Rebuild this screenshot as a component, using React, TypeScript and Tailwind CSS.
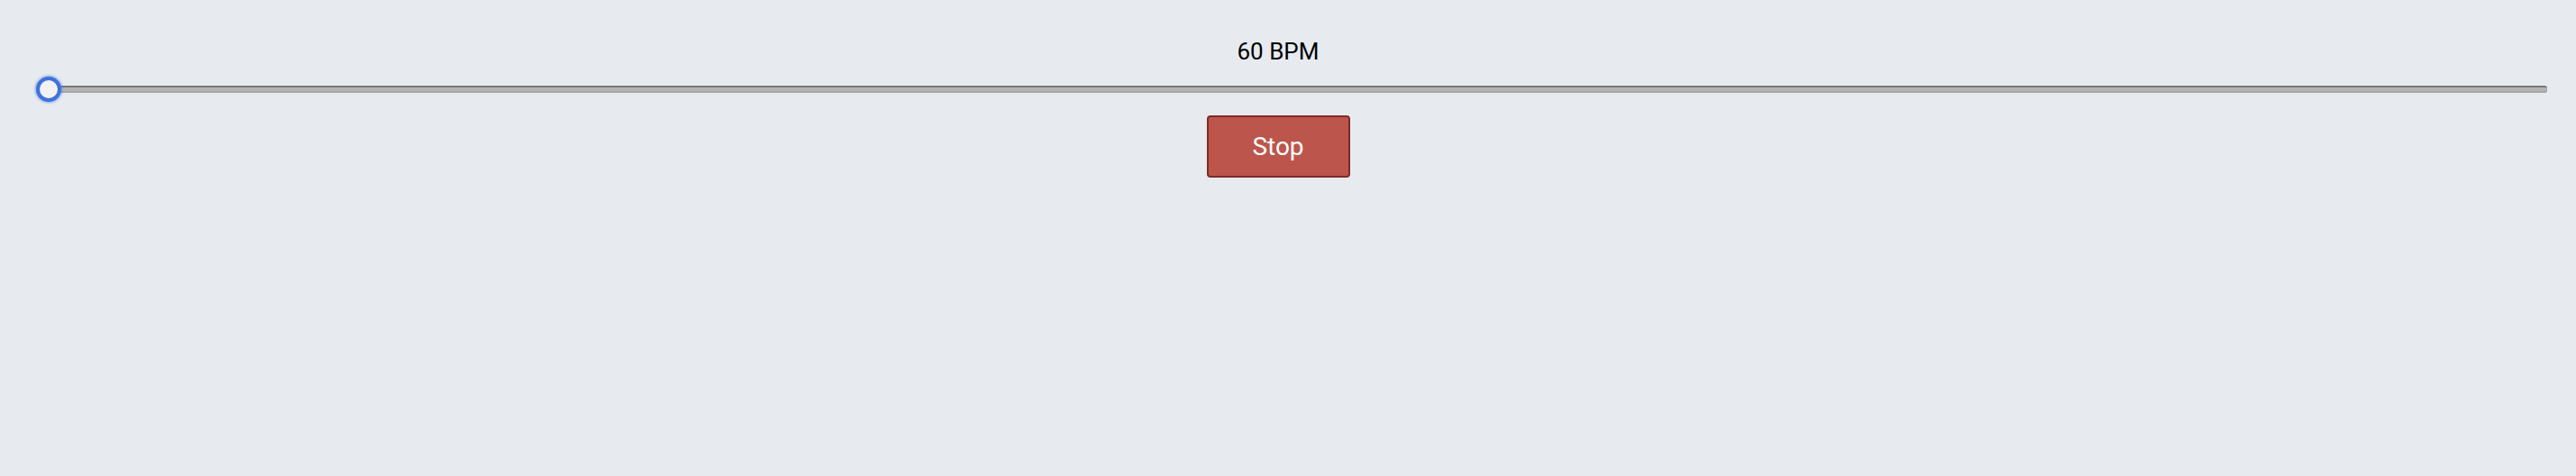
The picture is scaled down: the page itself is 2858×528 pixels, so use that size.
export default function App() {
  return (
    <div
      className="w-full h-[528px] bg-[#e7ebf0]"
      style={{ fontFamily: "Roboto, 'Liberation Sans', sans-serif" }}
    >
      <div className="w-[2836px] flex flex-col items-center pt-[42px]">
        <div className="text-[26px] leading-[30px] text-black">60 BPM</div>
        <div className="w-full pl-[40px] pr-[10px] mt-[13px]">
          <div className="relative h-[28px] flex items-center">
            <div className="ml-[14px] flex-1 h-[8px] rounded-r-[3px] border-t-2 border-[#777] bg-[#b4b4b4] shadow-[inset_0_-2px_0_#a6a6a6]" />
            <div className="absolute left-0 top-0 w-[28px] h-[28px] rounded-full bg-[#f2f2f2] border-[4px] border-[#3f72dc] shadow-[0_0_3px_1px_rgba(70,120,230,0.6)]" />
          </div>
        </div>
        <button className="mt-[15px] w-[159px] h-[69px] bg-[#bc564c] border-2 border-[#7e2a25] rounded-[4px] text-white text-[28px]">
          Stop
        </button>
      </div>
    </div>
  );
}
